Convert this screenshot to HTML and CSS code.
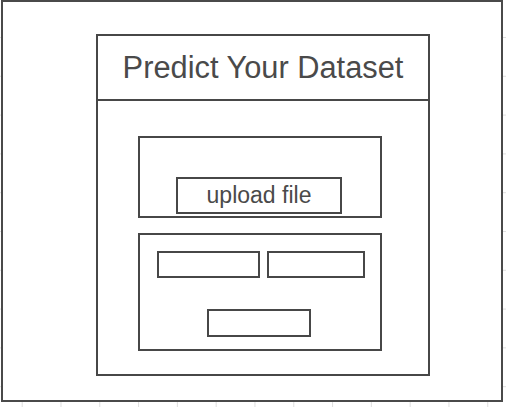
FILE: index.html
```html
<!DOCTYPE html>
<html>
<head>
<meta charset="utf-8">
<link rel="stylesheet" href="styles.css">
</head>
<body>
<div class="frame">
  <div class="card">
    <div class="card-header">Predict Your Dataset</div>
    <div class="card-body">
      <div class="upload-box">
        <div class="upload-btn">upload file</div>
      </div>
      <div class="form-box">
        <div class="input-row">
          <div class="input input-a"></div>
          <div class="input input-b"></div>
        </div>
        <div class="submit-btn"></div>
      </div>
    </div>
  </div>
</div>
</body>
</html>
```

FILE: styles.css
```css
* { box-sizing: border-box; }
html, body { margin: 0; padding: 0; }
body {
  width: 506px;
  height: 407px;
  overflow: hidden;
  font-family: "Liberation Sans", Arial, sans-serif;
  color: #4a4a4a;
  background-color: #fff;
  background-image:
    linear-gradient(to right, #dedede 1px, transparent 1px),
    linear-gradient(to bottom, #dedede 1px, transparent 1px);
  background-size: 38.8px 38.8px;
  background-position: 21.7px 37px;
}
.frame {
  margin-left: 1px;
  width: 502px;
  height: 402px;
  border: 2px solid #4a4a4a;
  background: #fff;
  padding: 32px 0 0 93px;
}
.card {
  width: 334px;
  height: 342px;
  border: 2px solid #474747;
  display: flex;
  flex-direction: column;
}
.card-header {
  height: 65px;
  border-bottom: 2px solid #474747;
  display: flex;
  align-items: center;
  justify-content: center;
  font-size: 30.8px;
  padding-top: 1px;
  color: #4a4a4a;
}
.card-body {
  padding: 35px 0 0 40px;
  display: flex;
  flex-direction: column;
  gap: 15px;
}
.upload-box {
  width: 244px;
  height: 82px;
  border: 2px solid #474747;
  display: flex;
  align-items: flex-end;
  padding: 0 0 2px 36px;
}
.upload-btn {
  width: 166px;
  height: 37px;
  border: 2px solid #474747;
  display: flex;
  align-items: center;
  justify-content: center;
  font-size: 23px;
  color: #4a4a4a;
  padding-bottom: 1px;
}
.form-box {
  width: 244px;
  height: 118px;
  border: 2px solid #474747;
  padding: 16px 0 0 17px;
  display: flex;
  flex-direction: column;
  gap: 31px;
}
.input-row {
  display: flex;
  gap: 7px;
}
.input {
  height: 27px;
  border: 2px solid #474747;
}
.input-a { width: 103px; }
.input-b { width: 98px; }
.submit-btn {
  margin-left: 50px;
  width: 104px;
  height: 28px;
  border: 2px solid #474747;
}
```
